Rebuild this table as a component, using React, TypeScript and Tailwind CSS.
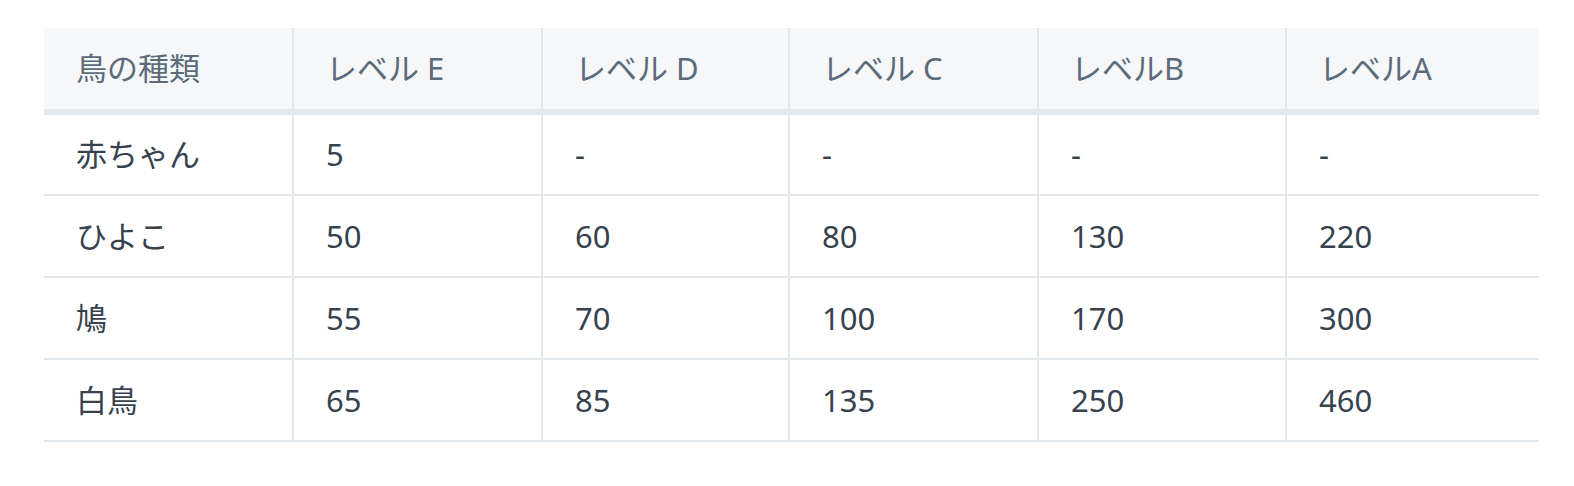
const headers = ["鳥の種類", "レベル E", "レベル D", "レベル C", "レベルB", "レベルA"];

const widths = ["w-[249px]", "w-[249px]", "w-[247px]", "w-[249px]", "w-[248px]", "w-[253px]"];

const rows = [
  ["赤ちゃん", "5", "-", "-", "-", "-"],
  ["ひよこ", "50", "60", "80", "130", "220"],
  ["鳩", "55", "70", "100", "170", "300"],
  ["白鳥", "65", "85", "135", "250", "460"],
];

export default function App() {
  return (
    <div
      className="min-h-[486px] bg-white pt-[28px] pl-[44px]"
      style={{ fontFamily: '"Noto Sans", "Noto Sans CJK JP", sans-serif' }}
    >
      <table className="w-[1495px] table-fixed border-collapse text-[31px]">
        <colgroup>
          {widths.map((w, i) => (
            <col key={i} className={w} />
          ))}
        </colgroup>
        <thead>
          <tr className="bg-[#f5f7f9] border-b-[6px] border-[#e3e8ed]">
            {headers.map((h, i) => (
              <th
                key={h}
                className={`h-[84px] px-8 text-left font-normal text-[#5c6b7a] ${
                  i < headers.length - 1 ? "border-r-2 border-[#e3e8ed]" : ""
                }`}
              >
                {h}
              </th>
            ))}
          </tr>
        </thead>
        <tbody>
          {rows.map((row, r) => (
            <tr key={row[0]} className="border-b-2 border-[#e3e8ed]">
              {row.map((cell, i) => (
                <td
                  key={i}
                  className={`${r === 0 ? "h-[83px]" : "h-[82px]"} px-8 text-[#37424f] ${
                    i < row.length - 1 ? "border-r-2 border-[#e3e8ed]" : ""
                  }`}
                >
                  {cell}
                </td>
              ))}
            </tr>
          ))}
        </tbody>
      </table>
    </div>
  );
}
